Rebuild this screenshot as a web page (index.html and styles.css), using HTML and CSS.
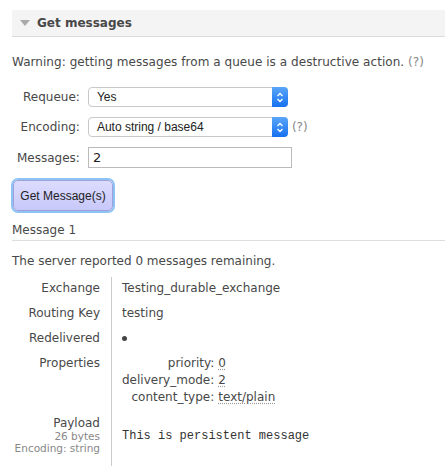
FILE: index.html
```html
<!DOCTYPE html>
<html>
<head>
<meta charset="utf-8">
<link rel="stylesheet" href="styles.css">
</head>
<body>
<div class="section">
  <h2 class="section-head"><span class="tri"></span>Get messages</h2>
  <div class="section-body">
    <p class="warn">Warning: getting messages from a queue is a destructive action. <span class="help">(?)</span></p>
    <div class="form">
      <label class="lbl">Requeue:</label>
      <div class="ctl"><div class="select w200"><span class="sel-text">Yes</span><span class="stepper"><svg width="8" height="11" viewBox="0 0 8 11"><path d="M1.5 4 L4 1.5 L6.5 4 M1.5 7 L4 9.5 L6.5 7" fill="none" stroke="#fff" stroke-width="1.3"/></svg></span></div></div>
      <label class="lbl">Encoding:</label>
      <div class="ctl"><div class="select w200"><span class="sel-text">Auto string / base64</span><span class="stepper"><svg width="8" height="11" viewBox="0 0 8 11"><path d="M1.5 4 L4 1.5 L6.5 4 M1.5 7 L4 9.5 L6.5 7" fill="none" stroke="#fff" stroke-width="1.3"/></svg></span></div><span class="help">(?)</span></div>
      <label class="lbl">Messages:</label>
      <div class="ctl"><div class="input">2</div></div>
    </div>
    <button class="btn">Get Message(s)</button>
    <h3 class="msg-head">Message 1</h3>
    <p class="server">The server reported 0 messages remaining.</p>
    <div class="facts">
      <div class="k">Exchange</div><div class="v">Testing_durable_exchange</div>
      <div class="k">Routing Key</div><div class="v">testing</div>
      <div class="k">Redelivered</div><div class="v"><span class="dot"></span></div>
      <div class="k">Properties</div>
      <div class="v">
        <div class="props">
          <span class="pk">priority:</span><span class="pv">0</span>
          <span class="pk">delivery_mode:</span><span class="pv">2</span>
          <span class="pk">content_type:</span><span class="pv">text/plain</span>
        </div>
      </div>
      <div class="k payload-k">Payload<div class="sub">26 bytes</div><div class="sub">Encoding: string</div></div>
      <div class="v payload-v"><pre class="payload">This is persistent message</pre></div>
    </div>
  </div>
</div>
</body>
</html>
```
FILE: styles.css
```css
html, body { margin: 0; padding: 0; background: #fff; }
body {
  font-family: "DejaVu Sans", Verdana, sans-serif;
  font-size: 12px;
  color: #484848;
  padding: 10px 0 0 12px;
}
.section-head {
  margin: 0;
  height: 26px;
  display: flex;
  align-items: center;
  background: #f4f4f4;
  border-bottom: 1px solid #dcdcdc;
  font-size: 12px;
  font-weight: bold;
  color: #484848;
  padding-left: 8px;
}
.tri {
  width: 0; height: 0;
  border-left: 5px solid transparent;
  border-right: 5px solid transparent;
  border-top: 6px solid #aaa;
  margin-right: 7px;
}
.section-body { padding-top: 18px; }
.warn { margin: 0 0 17px 0; line-height: 15px; letter-spacing: 0.05px; }
.help { color: #888; }
.form {
  display: grid;
  grid-template-columns: auto 1fr;
  column-gap: 8px;
  row-gap: 10px;
  align-items: center;
  padding-left: 5px;
}
.lbl { text-align: right; }
.ctl { display: flex; align-items: center; gap: 4px; }
.select {
  height: 18px;
  border: 1px solid #c8c8c8;
  border-radius: 4px;
  display: flex;
  align-items: center;
  background: #fff;
  font-family: "Liberation Sans", Arial, sans-serif;
  font-size: 12px;
  color: #222;
  box-sizing: content-box;
}
.w200 { width: 198px; }
.sel-text { flex: 1; padding-left: 8px; }
.stepper {
  width: 16px; height: 20px;
  margin: -1px -1px -1px 0;
  background: linear-gradient(#5aa6fb, #1670f0);
  border-radius: 0 4px 4px 0;
  display: flex; align-items: center; justify-content: center;
}
.input {
  width: 198px; height: 19px;
  border: 1px solid #bbb;
  padding-left: 4px;
  line-height: 19px;
  color: #222;
  font-size: 13px;
}
.btn {
  margin: 12px 0 0 1px;
  width: 100px; height: 31px;
  border: 1px solid #9f9fd9;
  border-radius: 5px;
  background: linear-gradient(#dcdcff, #c8c8fa);
  box-shadow: 0 0 0 2px #8ec3f6;
  font-family: "Liberation Sans", Arial, sans-serif;
  font-size: 12px;
  color: #222;
  padding: 0;
}
.msg-head {
  margin: 12px 0 0 0;
  font-size: 12px;
  font-weight: normal;
  padding-bottom: 3px;
  border-bottom: 1px solid #ddd;
}
.server { margin: 13px 0 0 0; }
.facts {
  margin-top: 9px;
  display: grid;
  grid-template-columns: 99px 1fr;
}
.k { text-align: right; padding: 4px 11px 7px 0; }
.v { border-left: 1px solid #ccc; padding: 4px 0 7px 10px; }
.dot { display: inline-block; width: 5px; height: 5px; border-radius: 50%; background: #444; vertical-align: middle; }
.props {
  display: grid;
  grid-template-columns: auto auto;
  justify-content: start;
  column-gap: 4px;
  row-gap: 3px;
}
.pk { text-align: right; }
.pv { text-decoration: underline dotted #999; text-underline-offset: 2px; }
.payload-k { padding-top: 5px; padding-bottom: 12px; }
.sub { font-size: 10.5px; color: #888; line-height: 12px; }
.payload-v { padding-top: 18px; padding-bottom: 14px; }
.payload {
  margin: 0;
  font-family: "Liberation Mono", "Courier New", monospace;
  font-size: 12px;
  color: #333;
}
```
